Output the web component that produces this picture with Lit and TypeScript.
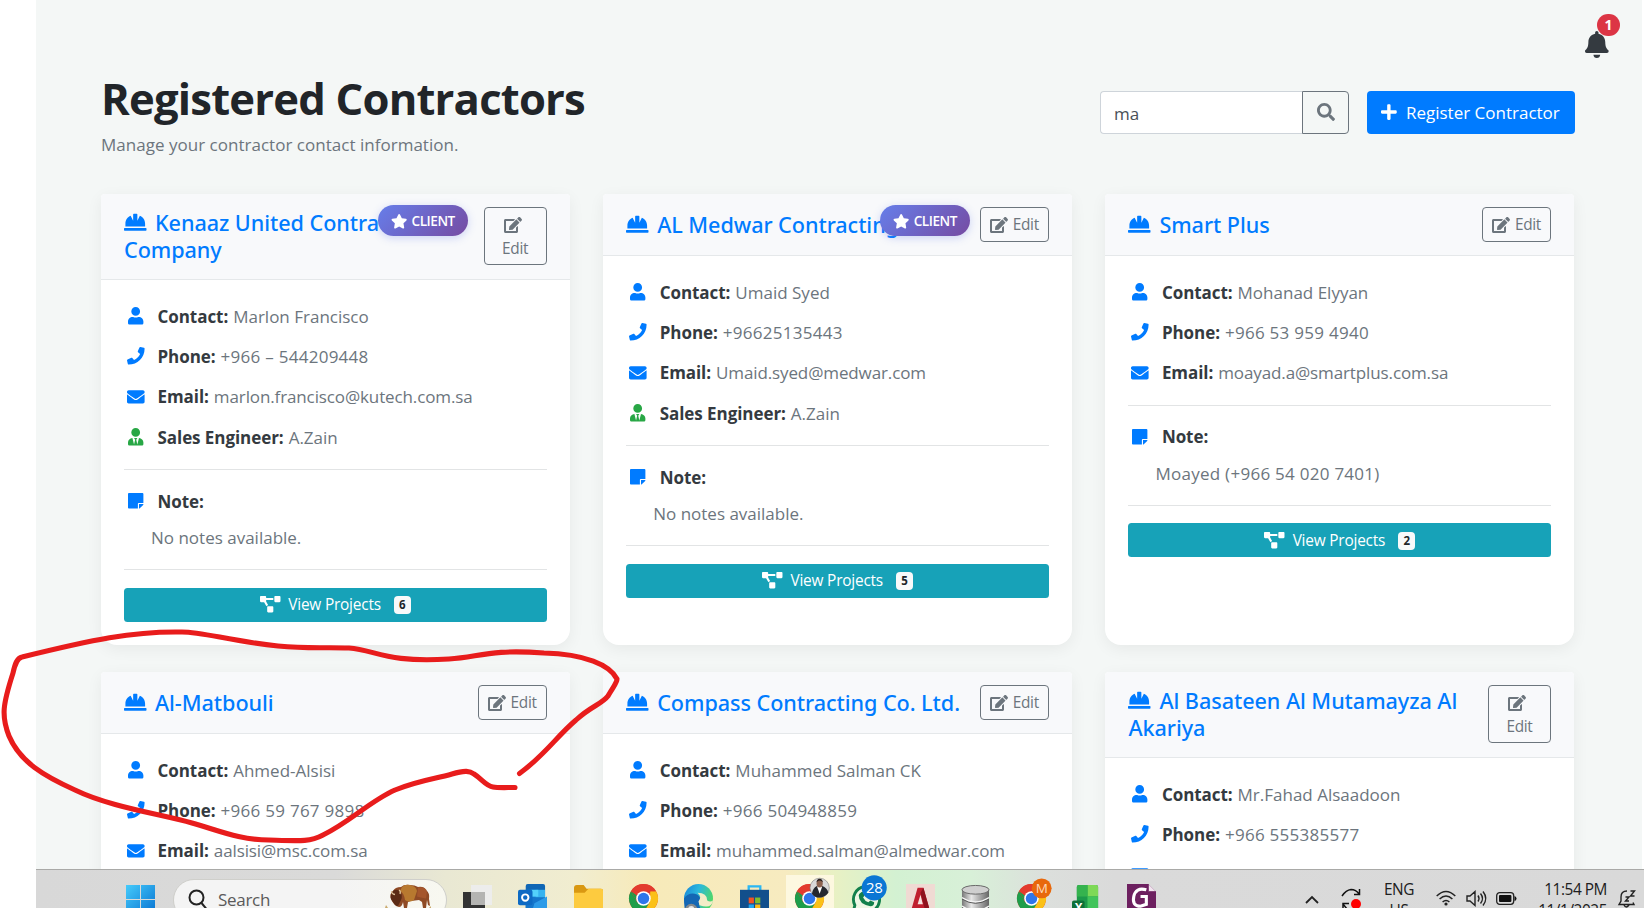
import { LitElement, html, css, svg, nothing } from "lit";
import { customElement, property } from "lit/decorators.js";

type Glyph = { w: number; d: string };

const GLYPHS: Record<string, Glyph> = {
  hat: { w: 512, d: "M480 288c0-80.25-49.28-148.92-119.19-177.62L304 224V80a16 16 0 0 0-16-16h-64a16 16 0 0 0-16 16v144l-56.81-113.62C81.28 139.08 32 207.75 32 288v64h448zm16 96H16a16 16 0 0 0-16 16v32a16 16 0 0 0 16 16h480a16 16 0 0 0 16-16v-32a16 16 0 0 0-16-16z" },
  user: { w: 448, d: "M224 256c70.7 0 128-57.3 128-128S294.7 0 224 0 96 57.3 96 128s57.3 128 128 128zm89.6 32h-16.7c-22.2 10.2-46.9 16-72.9 16s-50.6-5.8-72.9-16h-16.7C60.2 288 0 348.2 0 422.4V464c0 26.5 21.5 48 48 48h352c26.5 0 48-21.5 48-48v-41.6c0-74.2-60.2-134.4-134.4-134.4z" },
  phone: { w: 512, d: "M493.4 24.6l-104-24c-11.3-2.6-22.9 3.3-27.5 13.9l-48 112c-4.2 9.8-1.4 21.3 6.9 28l60.6 49.6c-36 76.7-98.9 140.5-177.2 177.2l-49.6-60.6c-6.8-8.3-18.2-11.1-28-6.9l-112 48C3.9 366.5-2 378.1.6 389.4l24 104C27.1 504.2 36.7 512 48 512c256.1 0 464-207.5 464-464 0-11.2-7.7-20.9-18.6-23.4z" },
  mail: { w: 512, d: "M502.3 190.8c3.9-3.1 9.7-.2 9.7 4.7V400c0 26.5-21.5 48-48 48H48c-26.5 0-48-21.5-48-48V195.6c0-5 5.7-7.8 9.7-4.7 22.4 17.4 52.1 39.5 154.1 113.6 21.1 15.4 56.7 47.8 92.2 47.6 35.7.3 72-32.8 92.3-47.6 102-74.1 131.6-96.3 154-113.7zM256 320c23.2.4 56.6-29.2 73.4-41.4 132.7-96.3 142.8-104.7 173.4-128.7 5.8-4.5 9.2-11.5 9.2-18.9v-19c0-26.5-21.5-48-48-48H48c-26.5 0-48 21.5-48 48v19c0 7.4 3.4 14.3 9.2 18.9 30.6 23.9 40.7 32.4 173.4 128.7 16.8 12.2 50.2 41.8 73.4 41.4z" },
  tie: { w: 448, d: "M224 256c70.7 0 128-57.3 128-128S294.7 0 224 0 96 57.3 96 128s57.3 128 128 128zm95.8 32.6L272 480l-32-136 32-56h-96l32 56-32 136-47.8-191.4C56.9 292 0 350.3 0 422.4V464c0 26.5 21.5 48 48 48h352c26.5 0 48-21.5 48-48v-41.6c0-72.1-56.9-130.4-128.2-133.8z" },
  note: { w: 448, d: "M312 320h136V56c0-13.3-10.7-24-24-24H24C10.7 32 0 42.7 0 56v400c0 13.3 10.7 24 24 24h264V344c0-13.2 10.8-24 24-24zm129 55l-98 98c-4.5 4.5-10.6 7-17 7h-6V352h128v6.1c0 6.3-2.5 12.4-7 16.9z" },
  edit: { w: 576, d: "M402.6 83.2l90.2 90.2c3.8 3.8 3.8 10 0 13.8L274.4 405.6l-92.8 10.3c-12.4 1.4-22.9-9.1-21.5-21.5l10.3-92.8L388.8 83.2c3.8-3.8 10-3.8 13.8 0zm162-22.9l-48.8-48.8c-15.2-15.2-39.9-15.2-55.2 0l-35.4 35.4c-3.8 3.8-3.8 10 0 13.8l90.2 90.2c3.8 3.8 10 3.8 13.8 0l35.4-35.4c15.2-15.3 15.2-40 0-55.2zM384 346.2V448H64V128h229.8c3.2 0 6.2-1.3 8.5-3.5l40-40c7.6-7.6 2.2-20.5-8.5-20.5H48C21.5 64 0 85.5 0 112v352c0 26.5 21.5 48 48 48h352c26.5 0 48-21.5 48-48V306.2c0-10.7-12.9-16-20.5-8.5l-40 40c-2.2 2.3-3.5 5.3-3.5 8.5z" },
  diagram: { w: 640, d: "M384 320H256c-17.67 0-32 14.33-32 32v128c0 17.67 14.33 32 32 32h128c17.67 0 32-14.33 32-32V352c0-17.67-14.33-32-32-32zM192 32c0-17.67-14.33-32-32-32H32C14.33 0 0 14.33 0 32v128c0 17.67 14.33 32 32 32h95.72l73.16 128.04C211.98 300.98 232.4 288 256 288h.28L192 175.51V128h224V64H192V32zM608 0H480c-17.67 0-32 14.33-32 32v128c0 17.67 14.33 32 32 32h128c17.67 0 32-14.33 32-32V32c0-17.67-14.33-32-32-32z" },
  search: { w: 512, d: "M505 442.7L405.3 343c-4.5-4.5-10.6-7-17-7H372c27.6-35.3 44-79.7 44-128C416 93.1 322.9 0 208 0S0 93.1 0 208s93.1 208 208 208c48.3 0 92.7-16.4 128-44v16.3c0 6.4 2.5 12.5 7 17l99.7 99.7c9.4 9.4 24.6 9.4 33.9 0l28.3-28.3c9.4-9.4 9.4-24.6.1-34zM208 336c-70.7 0-128-57.2-128-128 0-70.7 57.2-128 128-128 70.7 0 128 57.2 128 128 0 70.7-57.2 128-128 128z" },
  plus: { w: 448, d: "M416 208H272V64c0-17.67-14.33-32-32-32h-32c-17.67 0-32 14.33-32 32v144H32c-17.67 0-32 14.33-32 32v32c0 17.67 14.33 32 32 32h144v144c0 17.67 14.33 32 32 32h32c17.67 0 32-14.33 32-32V304h144c17.67 0 32-14.33 32-32v-32c0-17.67-14.33-32-32-32z" },
  bell: { w: 448, d: "M224 512c35.32 0 63.97-28.65 63.97-64H160.03c0 35.35 28.65 64 63.97 64zm215.39-149.71c-19.32-20.76-55.47-51.99-55.47-154.29 0-77.7-54.48-139.9-127.94-155.16V32c0-17.67-14.32-32-31.98-32s-31.98 14.33-31.98 32v20.84C118.56 68.1 64.08 130.3 64.08 208c0 102.3-36.15 133.53-55.47 154.29-6 6.45-8.66 14.16-8.61 21.71.11 16.4 12.98 32 32.1 32h383.8c19.12 0 32-15.6 32.1-32 .05-7.55-2.61-15.27-8.61-21.71z" },
  star: { w: 576, d: "M259.3 17.8L194 150.2 47.9 171.5c-26.2 3.8-36.7 36.1-17.7 54.6l105.7 103-25 145.5c-4.5 26.3 23.2 46 46.4 33.7L288 439.6l130.7 68.7c23.2 12.2 50.9-7.4 46.4-33.7l-25-145.5 105.7-103c19-18.5 8.5-50.8-17.7-54.6L382 150.2 316.7 17.8c-11.7-23.6-45.6-23.9-57.4 0z" },
};

const icon = (name: string) => {
  const g = GLYPHS[name];
  return html`<svg class="fa" viewBox="0 0 ${g.w} 512" fill="currentColor"><path d=${g.d}></path></svg>`;
};

interface Contractor {
  name: string[];
  client?: boolean;
  contact: string;
  phone: string;
  email: string;
  engineer?: string;
  note: string;
  projects: number;
}

const CONTRACTORS: Contractor[] = [
  { name: ["Kenaaz United Contracting", "Company"], client: true, contact: "Marlon Francisco", phone: "+966 – 544209448", email: "marlon.francisco@kutech.com.sa", engineer: "A.Zain", note: "No notes available.", projects: 6 },
  { name: ["AL Medwar Contracting"], client: true, contact: "Umaid Syed", phone: "+96625135443", email: "Umaid.syed@medwar.com", engineer: "A.Zain", note: "No notes available.", projects: 5 },
  { name: ["Smart Plus"], contact: "Mohanad Elyyan", phone: "+966 53 959 4940", email: "moayad.a@smartplus.com.sa", note: "Moayed (+966 54 020 7401)", projects: 2 },
  { name: ["Al-Matbouli"], contact: "Ahmed-Alsisi", phone: "+966 59 767 9898", email: "aalsisi@msc.com.sa", note: "", projects: 0 },
  { name: ["Compass Contracting Co. Ltd."], contact: "Muhammed Salman CK", phone: "+966 504948859", email: "muhammed.salman@almedwar.com", note: "", projects: 0 },
  { name: ["Al Basateen Al Mutamayza Al", "Akariya"], contact: "Mr.Fahad Alsaadoon", phone: "+966 555385577", email: "", note: "", projects: 0 },
];

const kind = (text: string) => (/\d{3}/.test(text) ? "num" : text.includes("@") ? "mail" : "word");

@customElement("contractor-card")
class ContractorCard extends LitElement {
  @property({ attribute: false }) item!: Contractor;

  static styles = css`
    :host { display: block; min-width: 0; }
    .card {
      position: relative; box-sizing: border-box; height: 100%; background: #fff;
      border-radius: 4px 4px 16px 16px;
      box-shadow: 0 4px 16px rgba(0, 0, 0, 0.06);
    }
    .fa { height: 1em; display: inline-block; overflow: visible; flex: none; }
    .head {
      display: flex; justify-content: space-between; align-items: center;
      padding: 13px 23px; background: #f8f9fb;
      border-bottom: 1px solid #e5e8ea; border-radius: 4px 4px 0 0;
    }
    .head.two { padding-bottom: 14px; }
    .name {
      margin: 0; color: #007bff; font-family: "Noto Sans", "Open Sans", sans-serif; font-size: 21.6px; font-weight: 500;
      line-height: 27px; letter-spacing: -0.05px; white-space: nowrap; min-width: 0; flex: 0 1 auto;
    }
    .name .fa { font-size: 22.5px; vertical-align: -2.5px; margin-right: 8.5px; }
    .edit {
      display: flex; align-items: center; justify-content: center; gap: 5px;
      box-sizing: border-box; width: 69px; height: 35px; flex: none; padding-top: 1px;
      border: 1px solid #6c757d; border-radius: 4px; color: #6c757d;
      font-size: 15.4px; letter-spacing: -0.3px;
    }
    .edit.tall { width: 63px; height: 58px; flex-direction: column; gap: 0; line-height: 23px; }
    .edit .fa { font-size: 16px; }
    .edit.tall .fa { margin: 3px 5px 4px 0; }
    .client {
      position: absolute; top: 11px; right: 101.6px; width: 90px; height: 31px; box-sizing: border-box; padding-top: 1px;
      display: flex; align-items: center; justify-content: center; gap: 4px;
      border-radius: 16px; color: #fff; font-size: 13.6px; font-weight: 600; letter-spacing: -0.45px;
      background: linear-gradient(135deg, #667eea, #764ba2);
      box-shadow: 0 2px 9px rgba(102, 126, 234, 0.3);
    }
    .client .fa { font-size: 14.5px; }
    .body { padding: 23.5px 23px 22px; }
    .row {
      display: flex; align-items: center; height: 26.4px; margin-bottom: 14.1px;
      color: #6c757d; white-space: nowrap;
    }
    .slot { width: 22px; margin-right: 11px; padding: 0 0 2.4px 0.5px; display: flex; justify-content: center; color: #007bff; flex: none; }
    .slot.green { color: #28a745; }
    .slot .fa { font-size: 17.6px; }
    .num { letter-spacing: 0.27px; }
    .mail { letter-spacing: -0.12px; }
    .word { letter-spacing: 0; }
    b { color: #343a40; font-weight: 700; letter-spacing: -0.06px; margin-right: 5px; }
    .rule { height: 1px; background: #e2e4e5; margin: 17.6px 0; }
    .rule.top { margin: 18px 0 18.6px; }
    .row.note { margin-bottom: 10px; }
    .memo { padding-left: 27px; line-height: 26.4px; color: #6c757d; }
    .view {
      display: flex; align-items: center; justify-content: center; height: 34px; box-sizing: border-box; padding-top: 1px;
      border-radius: 3.5px; background: #17a2b8; color: #fff; font-size: 15.4px; letter-spacing: -0.2px;
    }
    .view .fa { font-size: 16.4px; margin: -2px 8px 0 0; }
    .count {
      display: flex; align-items: center; justify-content: center; width: 17px; height: 18px;
      margin-left: 13px; border-radius: 4px; background: #f8f9fa; color: #212529;
      font-size: 11.5px; font-weight: 700;
    }
  `;

  private row(glyph: string, label: string, value: string, green = false) {
    return html`<div class="row"><span class="slot ${green ? "green" : ""}">${icon(glyph)}</span><b>${label}</b><span class=${kind(value)}>${value}</span></div>`;
  }

  render() {
    const c = this.item;
    const two = c.name.length > 1;
    return html`<article class="card">
      <header class="head ${two ? "two" : ""}">
        <h5 class="name">${icon("hat")}${c.name[0]}${two ? html`<br>${c.name[1]}` : nothing}</h5>
        <span class="edit ${two ? "tall" : ""}">${icon("edit")}<span>Edit</span></span>
      </header>
      ${c.client ? html`<span class="client">${icon("star")}CLIENT</span>` : nothing}
      <div class="body">
        ${this.row("user", "Contact:", c.contact)}
        ${this.row("phone", "Phone:", c.phone)}
        ${this.row("mail", c.email ? "Email:" : "", c.email)}
        ${c.engineer ? this.row("tie", "Sales Engineer:", c.engineer, true) : nothing}
        ${c.note
          ? html`<div class="rule top"></div>
              <div class="row note"><span class="slot">${icon("note")}</span><b>Note:</b></div>
              <div class="memo ${kind(c.note)}">${c.note}</div>
              <div class="rule"></div>
              <div class="view">${icon("diagram")}View Projects<span class="count">${c.projects}</span></div>`
          : nothing}
      </div>
    </article>`;
  }
}

const chrome = svg`
  <circle cx="15" cy="15" r="15" fill="#e33b2e"/>
  <path d="M2 7.5A15 15 0 0 0 15 30l6.500-11.250L8.500 18.750Z" fill="#1e9e4b"/>
  <path d="M28 7.500A15 15 0 0 1 15 30l6.500-11.250L22 7.500Z" fill="#fbc117"/>
  <path d="M2 7.500 8.500 18.750 15 15V7.500h13A15 15 0 0 0 2 7.500Z" fill="#e33b2e"/>
  <path d="M2 7.500 8.500 18.750A7.500 7.500 0 0 1 8 12Z" fill="#1e9e4b"/>
  <circle cx="15" cy="15" r="7.500" fill="#fff"/><circle cx="15" cy="15" r="5.900" fill="#2f76ea"/>`;

const APPS = [
  svg`<rect x="8" y="0" width="20" height="30" rx="2" fill="#1066b5"/><path d="M8 6h10v8H8z" fill="#1d8ae0"/><path d="M18 6h10v8H18z" fill="#36b3f0"/><path d="M14 6h7v7h-7z" fill="#53d1fb"/><path d="M8 14h20v16H8z" fill="#1576cc"/><path d="M17 20 30 13v17H14z" fill="#2d9be8"/><rect x="0" y="6" width="15" height="16" rx="2" fill="#0d6ac4"/><circle cx="7.500" cy="14" r="3.300" fill="none" stroke="#fff" stroke-width="2"/>`,
  svg`<path d="M0 4q0-3 3-3h7l3 4H28q2 0 2 2v22H0z" fill="#d99812"/><path d="M0 9h11l4-4h13q2 0 2 2v23H0z" fill="#fdcb3f"/><path d="M6 27q0-2 2-2h14q2 0 2 2v5H6z" fill="#1575cf"/>`,
  chrome,
  svg`<defs><linearGradient id="ea" x1="0" y1="0" x2="1" y2="0.400"><stop offset="0" stop-color="#1783d9"/><stop offset="0.500" stop-color="#2bb8dd"/><stop offset="1" stop-color="#4fd66c"/></linearGradient></defs><circle cx="15" cy="15" r="15" fill="url(#ea)"/><path d="M0 15Q4 9 11 10 17 11 17 17q-2 2-1 6l4 9H2Q0 24 0 15Z" fill="#1467b4"/><path d="M15 18q4-5-1-9 10 0 10 8 3 2 6 0-1 9-14 5Z" fill="#f3ecc7"/><circle cx="7.500" cy="27" r="6.500" fill="#85898c"/><circle cx="7.500" cy="26" r="3.200" fill="#e6e6e6"/>`,
  svg`<path d="M9 7V2.500h12V7" fill="none" stroke="#2bb7f4" stroke-width="2.400"/><path d="M0 6h30v24H0z" fill="#124f8c"/><path d="M9 14h5.400v6H9z" fill="#f15323"/><path d="M15.600 14H21v6h-5.400z" fill="#80bd2d"/><path d="M9 21.200h5.400V28H9z" fill="#22a7f0"/><path d="M15.600 21.200H21V28h-5.400z" fill="#fdbb16"/>`,
  svg`${chrome}<circle cx="25.500" cy="4" r="10" fill="#d9d9d9" stroke="#777" stroke-width="0.600"/><path d="M17.500 10q1-6 5-8l3 3 3-3q5 2 6 7-4 5-9 5t-8-4Z" fill="#26282e"/><path d="m23 3 2.500 7L28 3z" fill="#fff"/><ellipse cx="25.500" cy="-0.500" rx="3.200" ry="4.200" fill="#8d6350"/><path d="M22.200-1.500q.3-4 3.300-4t3.300 4q-1.500-2-3.300-2t-3.300 2Z" fill="#29211f"/>`,
  svg`<path d="M2 30 4 22A13.500 13.500 0 1 1 10 28Z" fill="#eef7e4" stroke="#13804c" stroke-width="3"/><path d="M10 9q2-2 3 0l1 3-1.500 2q2 4 5.500 5l2-2 4 2q0 4-4 4Q8 21 8 12q0-2 2-3Z" fill="#13804c"/><circle cx="24" cy="4" r="13" fill="#0a76d4"/><text x="24" y="9.500" class="badge">28</text>`,
  svg`<path d="M0 0h30v30H0z" fill="#f0dad3"/><path d="m12 4 6 0 8 28h-6l-2-6h-7l-3 6H4z" fill="#c01f2e"/><path d="m15 11 2.500 10H12z" fill="#f5e3df"/><path d="m18 4 8 28h-5L15 9z" fill="#8e121d"/>`,
  svg`<defs><linearGradient id="db"><stop offset="0" stop-color="#777"/><stop offset="0.350" stop-color="#e7e7e7"/><stop offset="1" stop-color="#666"/></linearGradient></defs><path d="M1 6h28v26H1z" fill="url(#db)"/><ellipse cx="15" cy="6" rx="14" ry="4.500" fill="#cfcfcf" stroke="#666" stroke-width="1"/><path d="M1 14q14 9 28 0M1 23q14 9 28 0" fill="none" stroke="#f5f5f5" stroke-width="1.500"/><path d="M1 15.500q14 9 28 0M1 24.500q14 9 28 0" fill="none" stroke="#555" stroke-width="1"/>`,
  svg`${chrome}<circle cx="25.500" cy="4.500" r="10.300" fill="#e8680c"/><text x="25.500" y="9.500" class="badge m">M</text>`,
  svg`<rect x="5" y="1" width="22" height="30" rx="2" fill="#1d9a4a"/><path d="M16 1h9q2 0 2 2v10H16z" fill="#7ed957"/><path d="M5 3q0-2 2-2h9v12H5z" fill="#35b34e"/><path d="M16 13h11v18H16z" fill="#41c45b"/><rect x="0" y="17" width="13" height="14" rx="2" fill="#0d7038"/><text x="6.500" y="29" class="badge x">X</text>`,
  svg`<path d="M0 0h22l8 8v24H0z" fill="#6d2060"/><path d="M22 0v8h8" fill="#f2e4ef" stroke="#6d2060"/><path d="M20 6q-11-3-13 7t7 10l6-2v-8h-6" fill="none" stroke="#fff" stroke-width="3.200"/><path d="M8 28h14v4H8z" fill="#e9d9e6"/>`,
];

@customElement("task-bar")
class TaskBar extends LitElement {
  static styles = css`
    :host { display: block; height: 39px; overflow: hidden; }
    .bar {
      display: flex; align-items: flex-start; height: 39px; box-sizing: border-box; position: relative;
      border-top: 1px solid #a9a9a7; color: #202020;
      background: linear-gradient(90deg, #d8d8d8 0, #dadad9 300px, #e9e8d3 410px, #f1edd0 540px, #f7eab9 610px,
        #f7ebc0 750px, #e8f1c4 800px, #d3f1d2 860px, #d8f0d8 935px, #dcdfdc 1010px, #dadada 1080px, #d9d9d9 100%);
    }
    svg { display: block; overflow: visible; flex: none; }
    .start { margin: 15px 0 0 90px; }
    .search {
      display: flex; align-items: flex-start; box-sizing: border-box; width: 274px; height: 42px; margin: 9px 0 0 18px; padding: 0 14px;
      border: 1px solid #cfcfcb; border-radius: 21px; background: linear-gradient(90deg, #f4f4f4 60%, #f8f8f0);
    }
    .lens { margin: 9px 10px 0 0; }
    .label { color: #5a5a5a; font-size: 17px; letter-spacing: -0.3px; line-height: 24px; margin-top: 8px; }
    .bison { margin: 3px 0 0 auto; }
    .task { margin: 15px 0 0 16px; width: 29px; }
    .apps { display: flex; margin-left: 13px; }
    .app { width: 55.4px; height: 50px; display: flex; justify-content: center; padding-top: 14px; box-sizing: border-box; }
    .app.active { background: linear-gradient(#fdf8e0, #fdf8e0) center 5px / 48px 50px no-repeat; border-radius: 6px; }
    .badge { fill: #fff; font-family: "Open Sans", sans-serif; font-size: 15.500px; text-anchor: middle; letter-spacing: -0.500px; }
    .badge.m { font-size: 14px; fill: #ffd9b8; }
    .badge.x { font-size: 12px; font-weight: 700; }
    .tray { margin-left: auto; display: flex; }
    .lines { font-size: 15.4px; line-height: 21px; letter-spacing: -0.45px; white-space: nowrap; margin-top: 9px; }
    .lang { text-align: center; width: 30px; margin-left: 23px; }
    .clock { text-align: right; width: 72px; margin-left: 18px; }
    .up { margin: 26px 0 0; }
    .sync { margin: 18px 0 0 22px; }
    .wifi { margin: 20px 0 0 22px; }
    .vol { margin: 20px 0 0 10px; }
    .bat { margin: 22px 0 0 9px; }
    .bell { margin: 19px 8px 0 11px; }
  `;

  render() {
    return html`<div class="bar">
      <svg class="start" width="29" height="29"><defs><linearGradient id="w" x2="1" y2="1"><stop offset="0" stop-color="#45cbfb"/><stop offset="1" stop-color="#0872d1"/></linearGradient></defs><path d="M0 0h14v14H0zM15 0h14v14H15zM0 15h14v14H0zM15 15h14v14H15z" fill="url(#w)"/></svg>
      <div class="search">
        <svg class="lens" width="20" height="24" fill="none" stroke="#222" stroke-width="2"><circle cx="8.500" cy="8.500" r="7"/><path d="m13.500 14 5 6"/></svg>
        <span class="label">Search</span>
        <svg class="bison" width="48" height="26"><path d="M7 16q-2-5 2-8 2-4 8-4 3-3 9-2 5 0 8 2 6-1 8 3 4 3 3 9l1 7-2-1-1-5-1 8h-3l-1-6-3-2-8 1-3 1-1 6h-3l-1-6q-1 5-4 5-5-1-8-8Z" fill="#8f4a25"/><path d="M18 4q4-4 11-1 3 1 4 5l-3 9q-5 3-9 0-1-7-5-9Z" fill="#b8792f"/><path d="M34 4.500q7-1 9 4l-1 7q-6-1-9-2Z" fill="#a5562c"/><path d="M8 9q3-4 8-1 3 4 1 9l-3 6q-3 0-5-4-4-4-1-10Z" fill="#5b2b15"/><path d="M7.500 8q0 3 3.500 3.500M15 7q2 1 1 4" fill="none" stroke="#e0c49a" stroke-width="1.300"/><path d="M1 25l1-3 2 3M44 26l3-3v3" fill="#c9a86a"/></svg>
      </div>
      <svg class="task" width="29" height="30"><path d="M0 7h22v23H0z" fill="#333"/><path d="M8 0h21v20H8z" fill="#ededec"/><path d="M8 7h14v13H8z" fill="#b4b4b2"/></svg>
      <div class="apps">${APPS.map((a, i) => html`<div class="app ${i === 5 ? "active" : ""}"><svg width="29" height="29" viewBox="0 0 30 30">${a}</svg></div>`)}</div>
      <div class="tray">
        <svg class="up" width="14" height="8" fill="none" stroke="#222" stroke-width="1.800"><path d="m1 7 6-6 6 6"/></svg>
        <svg class="sync" width="20" height="24" fill="none" stroke="#111" stroke-width="1.500"><path d="M1 8q4-6 9-6.500 5 0 8 4.500M18.500 1v5.500H13M2 22v-6.500h6M2 16l4 5"/><circle cx="15" cy="16" r="5" fill="red" stroke="none"/></svg>
        <div class="lines lang">ENG<br>US</div>
        <svg class="wifi" width="20" height="16" fill="none" stroke="#222" stroke-width="1.500"><path d="M.7 6q9.300-9 18.600 0M3.600 9q6.400-6 12.800 0M6.600 12q3.400-3 6.800 0"/><circle cx="10" cy="14" r="1.600" fill="#222" stroke="none"/></svg>
        <svg class="vol" width="21" height="18" fill="none" stroke="#222" stroke-width="1.400"><path d="M1 6v5h3l5 4.500V1.500L4 6ZM12 5.500q2 3 0 6M14.500 3.500q4 5 0 10M17 1.500q5.500 7 0 14"/></svg>
        <svg class="bat" width="21" height="13"><rect x=".7" y=".7" width="17" height="11.600" rx="3" fill="none" stroke="#222" stroke-width="1.300"/><rect x="3" y="3" width="12.400" height="7" rx="1" fill="#111"/><path d="M18.500 4q2 .5 2 2.500t-2 2.500Z" fill="#111"/></svg>
        <div class="lines clock">11:54 PM<br>11/1/2025</div>
        <svg class="bell" width="18" height="20" fill="none" stroke="#222" stroke-width="1.400"><path d="M9 2Q3 2 3 8v4l-2 3.500h15l-1-2M6 16q2 4 5 0M7.500 8h3.500l-3.500 4h3.500M12.500 2h4L12.500 7h4"/></svg>
      </div>
    </div>`;
  }
}

@customElement("app-root")
class AppRoot extends LitElement {
  static styles = css`
    :host { display: block; }
    .screen {
      position: relative; box-sizing: border-box; width: 1644px; height: 908px; overflow: hidden;
      padding-left: 36px; background: #fff; font: 17px/26.4px "Open Sans", "Noto Sans", sans-serif;
      color: #212529;
      display: grid; grid-template-rows: 869px 39px;
    }
    .page {
      box-sizing: border-box; width: 1606px; overflow: hidden; background: #f4f7f6; padding: 74px 67.5px 0 65px;
    }
    .fa { height: 1em; display: block; overflow: visible; flex: none; }
    .alerts { position: absolute; left: 1585px; top: 14px; width: 36px; height: 44px; }
    .alerts .fa { font-size: 27px; margin-top: 16.5px; color: #343a40; }
    .alerts span {
      position: absolute; right: 1px; top: 0; width: 23px; height: 22px; border-radius: 11px;
      background: #dc3545; color: #fff; font-size: 14px; font-weight: 700; line-height: 21px; text-align: center;
    }
    .top { display: flex; justify-content: space-between; height: 120px; }
    h1 { margin: -2px 0 0; font-size: 43.6px; line-height: 52.8px; font-weight: 700; letter-spacing: -0.8px; white-space: nowrap; }
    .sub { margin: 7px 0 0; color: #6c757d; white-space: nowrap; letter-spacing: 0.02px; }
    .tools { display: flex; align-items: center; height: 43px; margin-top: 17px; }
    .field {
      box-sizing: border-box; width: 202px; height: 43px; border: 1px solid #ced4da; border-right: 0; border-radius: 4px 0 0 4px;
      background: #fff; color: #495057; padding: 9px 13px;
    }
    .go {
      box-sizing: border-box; width: 46.500px; height: 43px; border: 1px solid #6c757d; border-radius: 0 4px 4px 0;
      display: flex; align-items: center; justify-content: center; color: #6c757d; font-size: 18px;
    }
    .go .fa { margin: -2px 0 0 1px; }
    .add {
      display: flex; align-items: center; justify-content: center; gap: 9px; width: 208px; height: 43px; margin-left: 18px;
      box-sizing: border-box; padding-top: 1px;
      border-radius: 4px; background: #007bff; color: #fff; white-space: nowrap; letter-spacing: 0;
    }
    .add .fa { font-size: 18px; margin-top: -2px; }
    .grid { display: grid; grid-template-columns: repeat(3, 1fr); gap: 27px 33.6px; grid-template-rows: 451px 451px; margin-right: 0.5px; }
    .ink { position: absolute; left: 0; top: 0; pointer-events: none; }
  `;

  render() {
    return html`<div class="screen">
      <main class="page">
        <div class="top">
          <div><h1>Registered Contractors</h1><p class="sub">Manage your contractor contact information.</p></div>
          <div class="tools">
            <div class="field">ma</div><div class="go">${icon("search")}</div>
            <div class="add">${icon("plus")}Register Contractor</div>
          </div>
        </div>
        <section class="grid">${CONTRACTORS.map((c) => html`<contractor-card .item=${c}></contractor-card>`)}</section>
      </main>
      <task-bar></task-bar>
      <div class="alerts">${icon("bell")}<span>1</span></div>
      <svg class="ink" width="640" height="908" fill="none" stroke="#e81c1c" stroke-width="5.100" stroke-linecap="round" stroke-linejoin="round">
        <path d="M519.500 773.500C545 755 556 737 576 720C591 706 602 704 608 696C613 687 617 683 617 679C610 665 585 654 544 653C488 649 480 657 449 659C386 663 376 650 349 648C323 647 310 649 278 646C230 641 203 632 182 632C133 631 91 640 22 657C17 658 15 664 13 673C3 704 1 716 9 736C20 762 44 776 75 790C110 807 160 814 192 823C220 831 240 840 269 840C300 841 310 842 323 835C350 822 370 801 395 790C420 780 435 779 452 774C465 770 470 771 474 774C482 779 486 786 493 787C498 788 506 787.500 515 787.500"/>
      </svg>
    </div>`;
  }
}
